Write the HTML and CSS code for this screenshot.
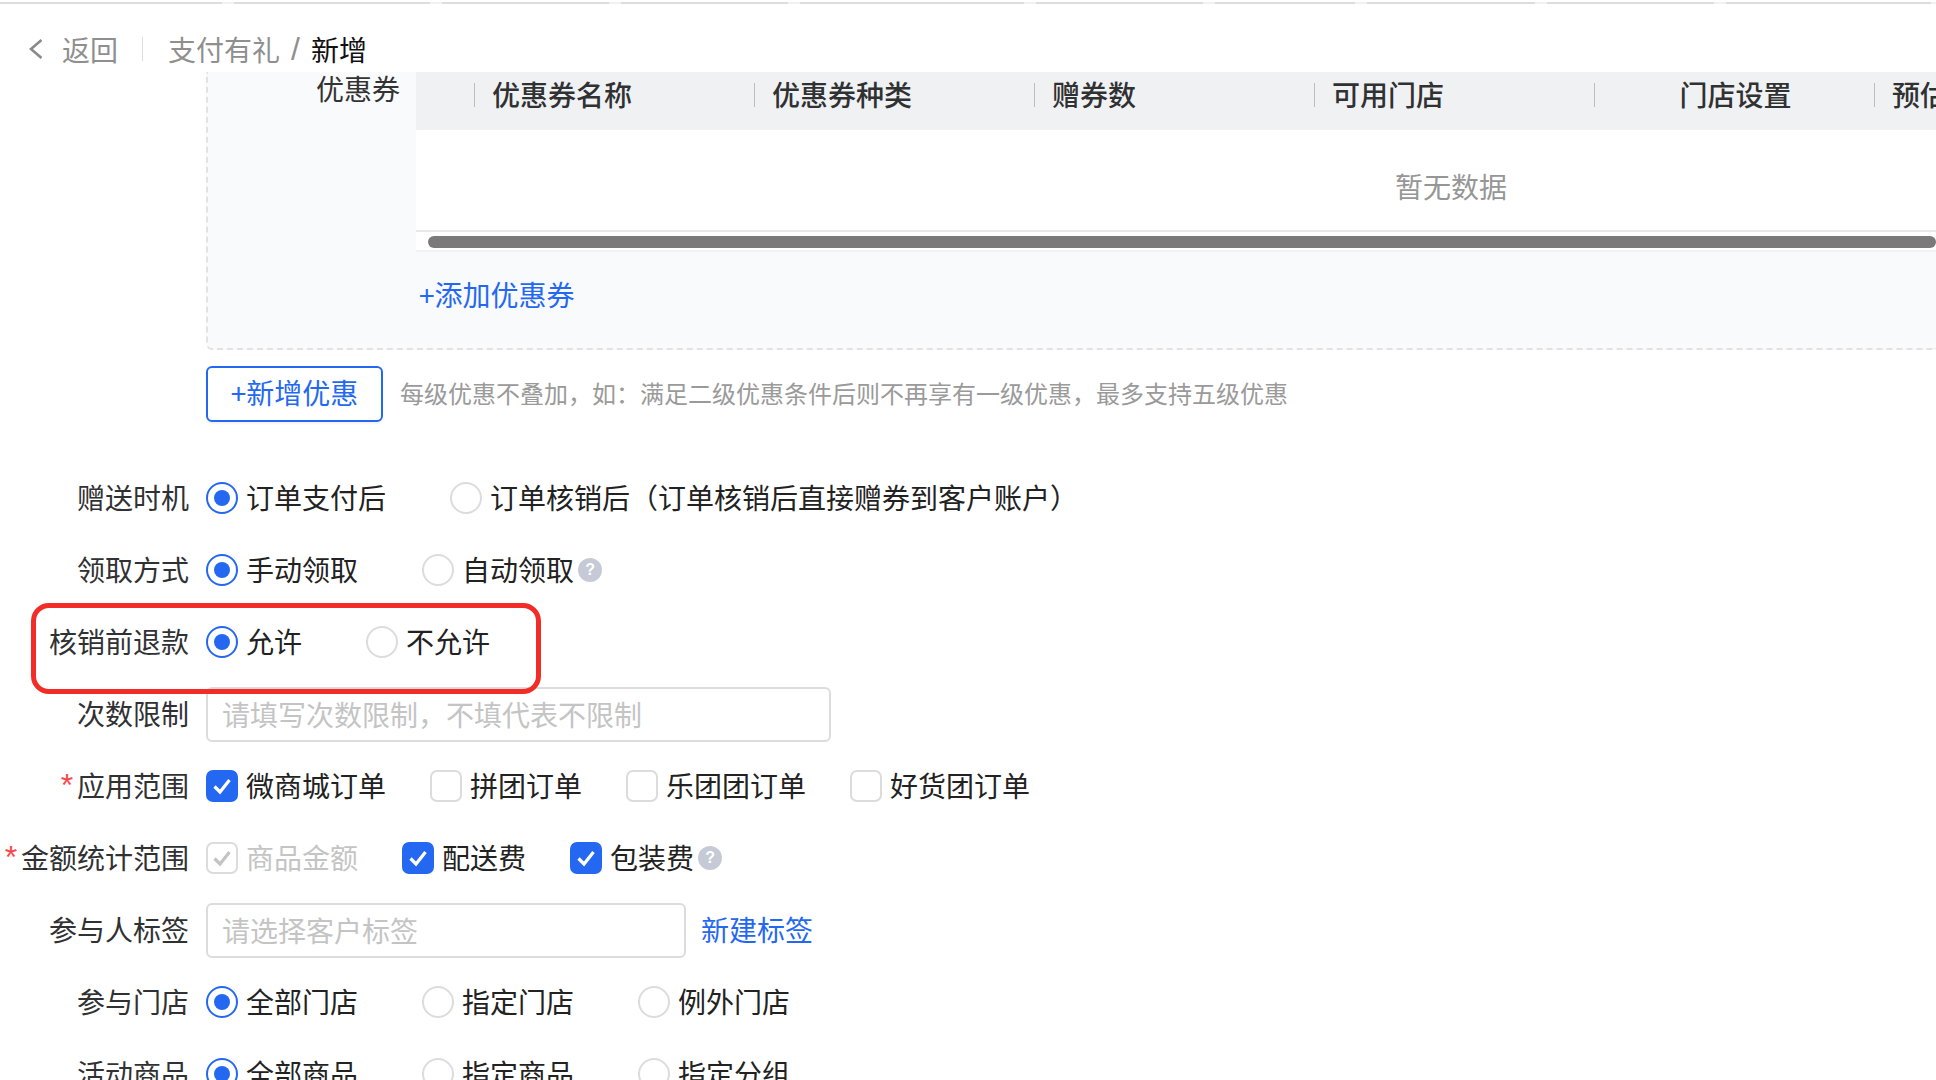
FILE: index.html
```html
<!DOCTYPE html>
<html lang="zh-CN">
<head>
<meta charset="utf-8">
<title>支付有礼 - 新增</title>
<link rel="stylesheet" href="styles.css">
</head>
<body>
<div class="page">
  <div class="tabstrip">
    <i class="seg s1"></i><i class="seg s2"></i><i class="seg s3"></i><i class="seg s4"></i><i class="seg s5"></i><i class="seg s6"></i><i class="seg s7"></i><i class="seg s8"></i><i class="seg s9"></i><i class="seg s10"></i>
  </div>
  <header class="crumbs">
    <svg class="back-icon" width="14" height="20" viewBox="0 0 14 20"><path d="M12.500 1 2 10 12.500 19" fill="none" stroke="#8a8a8a" stroke-width="2.600"/></svg>
    <span class="back">返回</span>
    <span class="crumb-divider"></span>
    <span class="crumb-parent">支付有礼</span>
    <span class="crumb-slash">/</span>
    <span class="crumb-current">新增</span>
  </header>

  <section class="panel">
    <div class="panel-label">优惠券</div>
    <div class="panel-body">
      <div class="table">
        <div class="thead">
          <div class="th th-select"></div>
          <div class="th"><span>优惠券名称</span></div>
          <div class="th"><span>优惠券种类</span></div>
          <div class="th"><span>赠券数</span></div>
          <div class="th"><span>可用门店</span></div>
          <div class="th th-center"><span>门店设置</span></div>
          <div class="th"><span>预估成本</span></div>
        </div>
        <div class="tbody">暂无数据</div>
        <div class="scrollbar"><div class="thumb"></div></div>
      </div>
      <a class="add-link">+添加优惠券</a>
    </div>
  </section>

  <div class="add-row">
    <button class="add-btn">+新增优惠</button>
    <span class="hint">每级优惠不叠加，如：满足二级优惠条件后则不再享有一级优惠，最多支持五级优惠</span>
  </div>

  <form class="form">
    <div class="row">
      <label class="label">赠送时机</label>
      <div class="opts">
        <span class="opt"><i class="radio on"></i>订单支付后</span>
        <span class="opt"><i class="radio"></i>订单核销后（订单核销后直接赠券到客户账户）</span>
      </div>
    </div>
    <div class="row">
      <label class="label">领取方式</label>
      <div class="opts">
        <span class="opt"><i class="radio on"></i>手动领取</span>
        <span class="opt"><i class="radio"></i>自动领取<i class="help">?</i></span>
      </div>
    </div>
    <div class="row row-marked">
      <label class="label">核销前退款</label>
      <div class="opts">
        <span class="opt"><i class="radio on"></i>允许</span>
        <span class="opt"><i class="radio"></i>不允许</span>
      </div>
      <div class="highlight"></div>
    </div>
    <div class="row">
      <label class="label">次数限制</label>
      <input class="input input-wide" placeholder="请填写次数限制，不填代表不限制">
    </div>
    <div class="row">
      <label class="label"><em>*</em>应用范围</label>
      <div class="opts checks">
        <span class="opt"><i class="check on"><svg width="20" height="18" viewBox="0 0 20 18"><path d="M2.500 9.500 8 15 17.500 3" fill="none" stroke="#fff" stroke-width="3.200"/></svg></i>微商城订单</span>
        <span class="opt"><i class="check"></i>拼团订单</span>
        <span class="opt"><i class="check"></i>乐团团订单</span>
        <span class="opt"><i class="check"></i>好货团订单</span>
      </div>
    </div>
    <div class="row">
      <label class="label"><em>*</em>金额统计范围</label>
      <div class="opts checks">
        <span class="opt disabled"><i class="check"><svg width="20" height="18" viewBox="0 0 20 18"><path d="M2.500 9.500 8 15 17.500 3" fill="none" stroke="#c4c4c4" stroke-width="3.200"/></svg></i>商品金额</span>
        <span class="opt"><i class="check on"><svg width="20" height="18" viewBox="0 0 20 18"><path d="M2.500 9.500 8 15 17.500 3" fill="none" stroke="#fff" stroke-width="3.200"/></svg></i>配送费</span>
        <span class="opt"><i class="check on"><svg width="20" height="18" viewBox="0 0 20 18"><path d="M2.500 9.500 8 15 17.500 3" fill="none" stroke="#fff" stroke-width="3.200"/></svg></i>包装费<i class="help">?</i></span>
      </div>
    </div>
    <div class="row">
      <label class="label">参与人标签</label>
      <input class="input input-tag" placeholder="请选择客户标签">
      <a class="new-tag">新建标签</a>
    </div>
    <div class="row">
      <label class="label">参与门店</label>
      <div class="opts">
        <span class="opt"><i class="radio on"></i>全部门店</span>
        <span class="opt"><i class="radio"></i>指定门店</span>
        <span class="opt"><i class="radio"></i>例外门店</span>
      </div>
    </div>
    <div class="row">
      <label class="label">活动商品</label>
      <div class="opts">
        <span class="opt"><i class="radio on"></i>全部商品</span>
        <span class="opt"><i class="radio"></i>指定商品</span>
        <span class="opt"><i class="radio"></i>指定分组</span>
      </div>
    </div>
  </form>
</div>
</body>
</html>
```
FILE: styles.css
```css
* { box-sizing: border-box; }
html, body { margin: 0; height: 100%; overflow: hidden; background: #fff; }
body { font-family: "Noto Sans CJK SC", "Noto Sans", sans-serif; font-size: 28px; color: #222; }
.page { width: 1936px; height: 1080px; overflow: hidden; }

.tabstrip { height: 4px; padding-top: 2px; display: flex; background: #eff1f4; background-clip: content-box; }
.seg { display: block; height: 2px; background: #ddd; margin-right: 12px; }
.s1 { width: 222px; } .s2 { width: 196px; } .s3 { width: 167px; } .s4 { width: 167px; } .s5 { width: 224px; }
.s6 { width: 167px; } .s7 { width: 140px; } .s8 { width: 168px; } .s9 { width: 167px; } .s10 { width: 205px; margin-right: 0; }

.crumbs { height: 68px; display: flex; align-items: center; padding: 22px 0 0 29px; line-height: 36px; }
.back-icon { margin-right: 19px; }
.back { color: #8f8f8f; }
.crumb-divider { width: 1px; height: 24px; background: #ddd; margin: 0 25px 0 24px; }
.crumb-parent { color: #8f8f8f; }
.crumb-slash { color: #8f8f8f; margin: 0 11px 0 11px; font: 32px/36px "Liberation Sans", sans-serif; }
.crumb-current { color: #111; }

.panel { margin-left: 206px; height: 278px; display: flex; background: #f9fafc; border-left: 2px dashed #e2e2e2; border-bottom: 2px dashed #e2e2e2; border-bottom-left-radius: 6px; }
.panel-label { width: 208px; flex: none; padding: 0 16px 0 0; margin-top: -2px; text-align: right; color: #333; line-height: 36px; }
.panel-body { flex: 1; min-width: 0; overflow: hidden; }
.table { width: 2070px; background: #fff; }
.thead { height: 58px; display: flex; align-items: flex-start; padding-top: 11px; background: #f0f1f3; font-weight: 500; color: #303133; }
.th { width: 280px; flex: none; height: 24px; display: flex; align-items: center; padding: 0 0 2px 17px; border-left: 1px solid #b9bec8; line-height: 24px; white-space: nowrap; }
.th-select { width: 58px; border-left: 0; padding: 0; }
.th-center { justify-content: center; padding: 0 0 2px 2px; }
.tbody { height: 100px; padding-top: 11px; display: flex; align-items: center; justify-content: center; color: #969696; }
.scrollbar { height: 22px; border-top: 2px solid #e8e8e8; border-bottom: 2px solid #f0f1f3; padding: 4px 0 0 12px; background: #fff; }
.thumb { width: 1508px; height: 12px; background: #7a7a7a; border-radius: 6px; }
.add-link { display: block; margin: 24px 0 0 3px; line-height: 36px; color: #2468f2; }

.add-row { display: flex; align-items: center; margin: 16px 0 0 206px; height: 56px; }
.add-btn { width: 177px; height: 56px; padding: 0 0 4px; border: 2px solid #2468f2; border-radius: 6px; background: #fff; color: #2468f2; font: inherit; box-shadow: 0 2px 2px #f2f3f5; }
.hint { margin: 0 0 4px 17px; font-size: 24px; color: #9a9a9a; }

.form { margin-top: 40px; }
.row { height: 72px; display: flex; align-items: center; }
.row-marked { position: relative; }
.label { width: 189px; flex: none; margin-right: 17px; padding-bottom: 2px; text-align: right; color: #303133; white-space: nowrap; }
.label em { display: inline-block; width: 14px; height: 28px; margin-right: 3px; color: #f5484b; font: normal 32px/40px "Liberation Sans", sans-serif; text-align: center; vertical-align: top; }
.opts { display: flex; align-items: center; }
.opt { display: flex; align-items: center; margin-right: 64px; padding-bottom: 2px; white-space: nowrap; }
.checks .opt { margin-right: 44px; }
.disabled { color: #c4c4c4; }
.radio { width: 32px; height: 32px; flex: none; margin: 2px 8px 0 0; border: 2px solid #dcdcdc; border-radius: 50%; background: #fff; display: flex; align-items: center; justify-content: center; }
.radio.on { border-color: #2468f2; }
.radio.on::after { content: ""; width: 16px; height: 16px; border-radius: 50%; background: #2468f2; }
.check { width: 32px; height: 32px; flex: none; margin: 2px 8px 0 0; border: 2px solid #dcdcdc; border-radius: 7px; background: #fff; display: flex; align-items: center; justify-content: center; }
.check.on { border-color: #2468f2; background: #2468f2; }
.help { width: 24px; height: 24px; margin: 2px 0 0 4px; border-radius: 50%; background: #c5cad6; color: #fff; font: 700 16px/24px "Liberation Sans", sans-serif; text-align: center; }
.input { height: 55px; border: 2px solid #dcdcdc; border-radius: 6px; background: #fff; padding: 0 14px; font: inherit; color: #333; outline: none; }
.input::placeholder { color: #c4c4c4; opacity: 1; }
.input-wide { width: 625px; }
.input-tag { width: 480px; }
.new-tag { margin-left: 15px; padding-bottom: 2px; color: #2468f2; }
.highlight { position: absolute; z-index: 1; left: 31px; top: -3px; width: 510px; height: 91px; border: 5px solid #f22c26; border-radius: 18px; pointer-events: none; }
```
